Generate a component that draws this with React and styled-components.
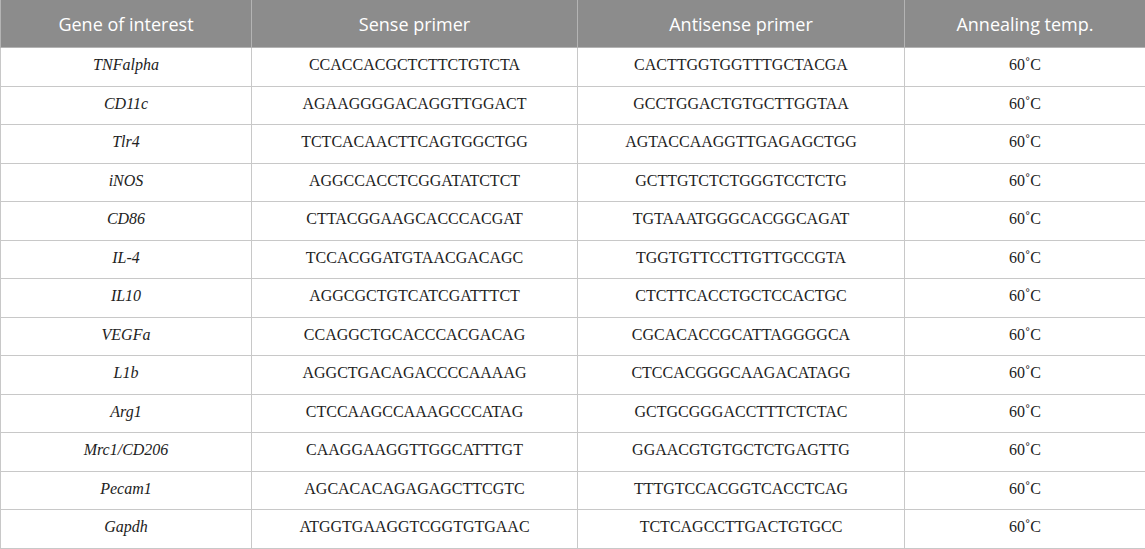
import styled, { createGlobalStyle } from "styled-components";

const GlobalStyle = createGlobalStyle`
  html, body {
    margin: 0;
    padding: 0;
    background: #ffffff;
  }
`;

const Table = styled.table`
  width: 1145px;
  border-collapse: collapse;
  table-layout: fixed;
  font-family: "Liberation Serif", "Times New Roman", serif;
`;

const HeadCell = styled.th`
  height: 47px;
  padding: 0;
  background: #8c8c8c;
  color: #ffffff;
  font-family: "Open Sans", "Noto Sans", sans-serif;
  font-weight: 400;
  font-size: 18px;
  text-align: center;
  border: 1px solid #b4b4b4;
  border-top: none;
`;

const Cell = styled.td`
  height: 34.5px;
  padding: 0 0 3px;
  font-size: 16px;
  line-height: 18px;
  color: #222222;
  text-align: center;
  border: 1px solid #c8c8c8;
  font-style: ${({ $italic }) => ($italic ? "italic" : "normal")};
`;

const columns = [
  { title: "Gene of interest", width: 251 },
  { title: "Sense primer", width: 326 },
  { title: "Antisense primer", width: 327 },
  { title: "Annealing temp.", width: 241 },
];

const rows = [
  ["TNFalpha", "CCACCACGCTCTTCTGTCTA", "CACTTGGTGGTTTGCTACGA"],
  ["CD11c", "AGAAGGGGACAGGTTGGACT", "GCCTGGACTGTGCTTGGTAA"],
  ["Tlr4", "TCTCACAACTTCAGTGGCTGG", "AGTACCAAGGTTGAGAGCTGG"],
  ["iNOS", "AGGCCACCTCGGATATCTCT", "GCTTGTCTCTGGGTCCTCTG"],
  ["CD86", "CTTACGGAAGCACCCACGAT", "TGTAAATGGGCACGGCAGAT"],
  ["IL-4", "TCCACGGATGTAACGACAGC", "TGGTGTTCCTTGTTGCCGTA"],
  ["IL10", "AGGCGCTGTCATCGATTTCT", "CTCTTCACCTGCTCCACTGC"],
  ["VEGFa", "CCAGGCTGCACCCACGACAG", "CGCACACCGCATTAGGGGCA"],
  ["L1b", "AGGCTGACAGACCCCAAAAG", "CTCCACGGGCAAGACATAGG"],
  ["Arg1", "CTCCAAGCCAAAGCCCATAG", "GCTGCGGGACCTTTCTCTAC"],
  ["Mrc1/CD206", "CAAGGAAGGTTGGCATTTGT", "GGAACGTGTGCTCTGAGTTG"],
  ["Pecam1", "AGCACACAGAGAGCTTCGTC", "TTTGTCCACGGTCACCTCAG"],
  ["Gapdh", "ATGGTGAAGGTCGGTGTGAAC", "TCTCAGCCTTGACTGTGCC"],
];

export default function App() {
  return (
    <>
      <GlobalStyle />
      <Table>
        <colgroup>
          {columns.map((c) => (
            <col key={c.title} style={{ width: c.width }} />
          ))}
        </colgroup>
        <thead>
          <tr>
            {columns.map((c) => (
              <HeadCell key={c.title}>{c.title}</HeadCell>
            ))}
          </tr>
        </thead>
        <tbody>
          {rows.map(([gene, sense, antisense]) => (
            <tr key={gene}>
              <Cell $italic>{gene}</Cell>
              <Cell>{sense}</Cell>
              <Cell>{antisense}</Cell>
              <Cell>60˚C</Cell>
            </tr>
          ))}
        </tbody>
      </Table>
    </>
  );
}
